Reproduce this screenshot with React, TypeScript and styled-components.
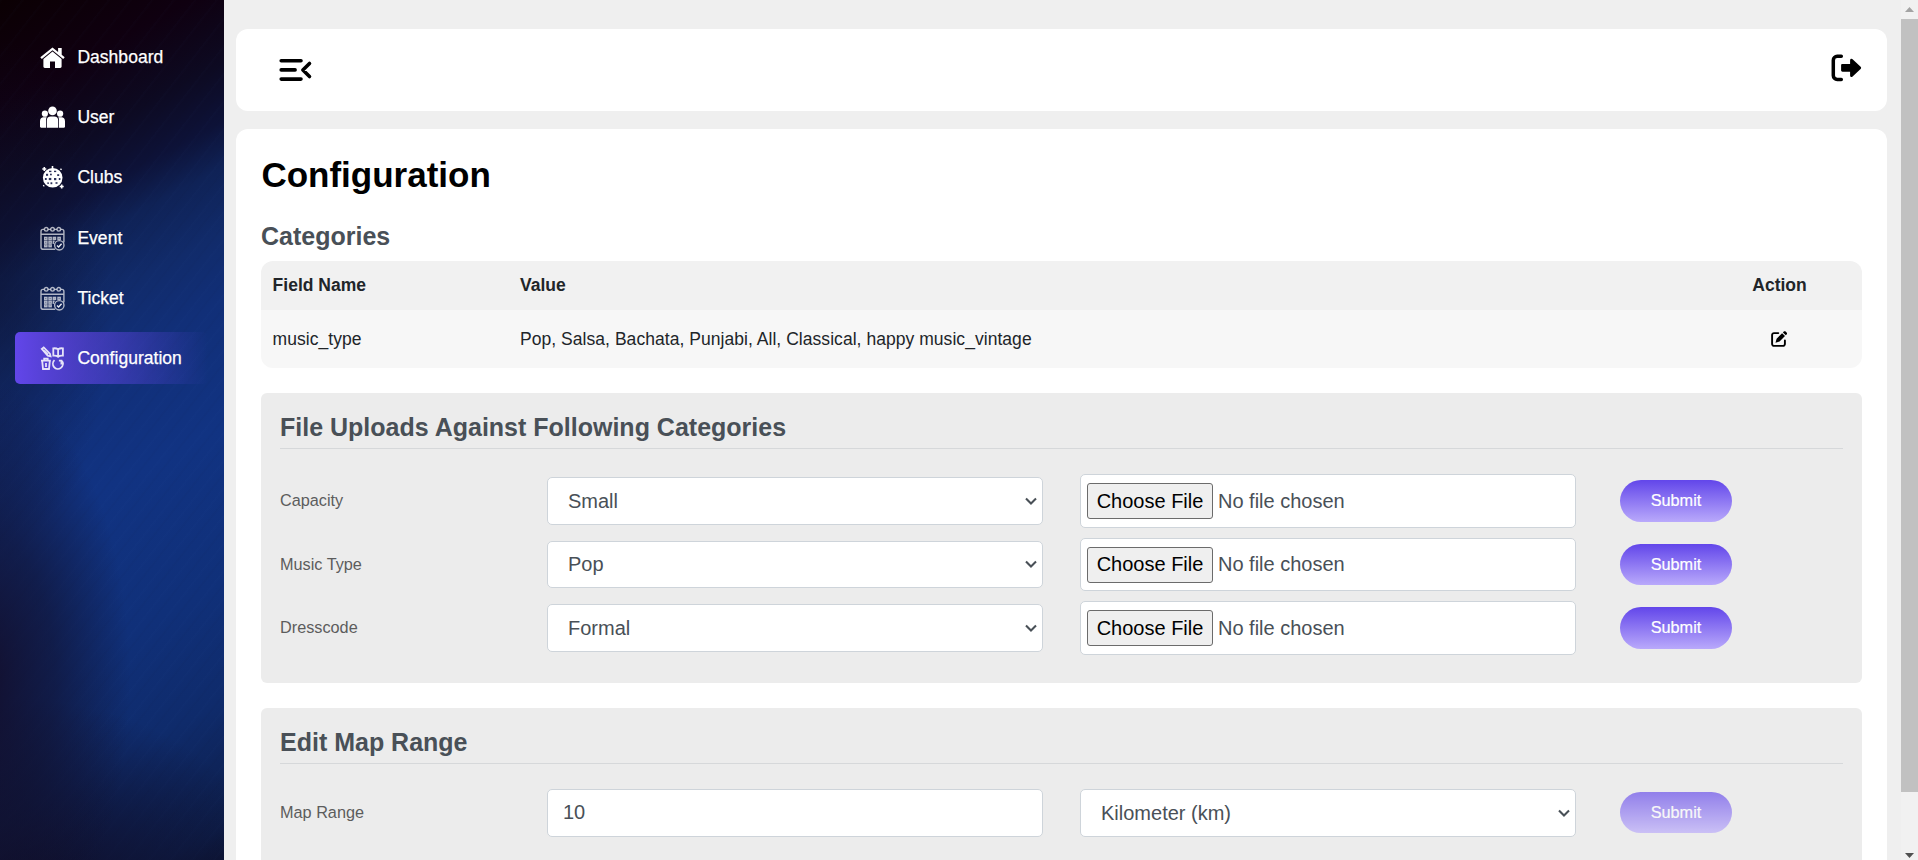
import React from "react";
import styled, { createGlobalStyle, css } from "styled-components";

const GlobalStyle = createGlobalStyle`
  *, *::before, *::after { box-sizing: border-box; }
  html, body { margin: 0; height: 100%; overflow: hidden; }
  body {
    background: #efefef;
    color: #212529;
    font-family: "Liberation Sans", Arial, sans-serif;
    font-size: 17.5px;
  }
  h1, h2 { margin: 0; }
`;

const Page = styled.div`
  display: flex;
  height: 100vh;
  overflow: hidden;
`;

const Sidebar = styled.nav`
  flex: 0 0 224px;
  padding: 31.7px 16px 0 15px;
  background:
    radial-gradient(ellipse 150px 300px at -20px 680px, rgba(19, 11, 36, 0.9), rgba(17, 15, 42, 0.6) 50%, transparent),
    radial-gradient(ellipse 260px 200px at 20px 900px, rgba(16, 11, 34, 0.9), rgba(15, 14, 42, 0.5) 55%, transparent),
    radial-gradient(ellipse 110px 260px at 0 300px, rgba(13, 16, 44, 0.5), transparent),
    repeating-linear-gradient(128deg, rgba(80, 130, 220, 0.014) 0 1px, transparent 3px 7px, rgba(0, 0, 0, 0.025) 9px, transparent 11px 17px),
    linear-gradient(152deg, #0b0003 0, #0f0010 90px, #0d0a22 160px, #0d1238 212px, #0f2256 252px, #112b6a 310px, #112f78 370px, #113382 480px, #103079 620px, #0f2b6b 724px, #0d1d48 836px, #0c1638 860px);
`;

const NavItem = styled.a<{ $active?: boolean }>`
  display: flex;
  align-items: center;
  height: 52px;
  margin-bottom: 8.15px;
  padding-left: 25px;
  gap: 12.4px;
  border-radius: 5px;
  color: #fff;
  font-size: 17.5px;
  letter-spacing: 0.03px;
  -webkit-text-stroke: 0.25px #fff;
  text-decoration: none;
  ${(p) => p.$active && css`background: linear-gradient(90deg, #6246ea, rgba(98, 70, 234, 0));`}

  svg { flex: none; width: 25px; height: 25px; }
`;

const Main = styled.main`
  flex: 1;
  min-width: 0;
  padding: 29px 14px 0 12px;
`;

const TopBar = styled.header`
  display: flex;
  align-items: center;
  justify-content: space-between;
  height: 82px;
  margin-bottom: 18px;
  padding: 0 25px 0 43px;
  border-radius: 12px;
  background: #fff;
`;

const Card = styled.section`
  height: 900px;
  padding: 25px;
  border-radius: 12px;
  background: #fff;
`;

const PageTitle = styled.h1`
  padding-left: 0.4px;
  color: #000;
  font-size: 35px;
  line-height: 42px;
`;

const SectionTitle = styled.h2`
  color: #495057;
  font-size: 25px;
  line-height: 30px;
`;

const CategoriesTitle = styled(SectionTitle)`
  margin: 25px 0 10px;
`;

const Table = styled.div`
  overflow: hidden;
  margin-bottom: 25px;
  border-radius: 12px;
`;

const TableRow = styled.div<{ $head?: boolean }>`
  display: grid;
  grid-template-columns: 247.4px 1fr 165px;
  align-items: center;
  height: ${(p) => (p.$head ? 49 : 58)}px;
  padding-left: 11.6px;
  background: ${(p) => (p.$head ? "#f1f1f1" : "#f7f7f7")};
  font-weight: ${(p) => (p.$head ? 700 : 400)};
  letter-spacing: ${(p) => (p.$head ? 0 : 0.045)}px;
`;

const ActionCell = styled.div`
  display: flex;
  justify-content: center;
`;

const Panel = styled.section`
  margin-bottom: 25px;
  padding: 19px 19px 28.25px;
  border-radius: 6px;
  background: #ececec;
`;

const PanelHead = styled.div`
  height: 37px;
  margin-bottom: 25px;
  border-bottom: 1px solid #d6d8da;
`;

const Rows = styled.div`
  display: grid;
  row-gap: 9.75px;
`;

const FormRow = styled.div`
  display: grid;
  grid-template-columns: [label] 267px [first] 496px 37px [second] 496px 44px [action] 112px;
  align-items: center;

  & > :nth-child(1) { grid-column: label; }
  & > :nth-child(2) { grid-column: first; }
  & > :nth-child(3) { grid-column: second; }
  & > :nth-child(4) { grid-column: action; }
`;

const Label = styled.span`
  color: #5c5c5c;
  font-size: 16.25px;
`;

const control = css`
  border: 1px solid #ced4da;
  border-radius: 5px;
  background: #fff;
  color: #495057;
  font-family: inherit;
  font-size: 20px;
`;

const TextInput = styled.input`
  ${control}
  width: 100%;
  height: 47.5px;
  padding: 0 15px;
`;

const SelectWrap = styled.div`
  display: grid;
  align-items: center;

  & > * { grid-area: 1 / 1; }
  & > svg { justify-self: end; margin-right: 6px; pointer-events: none; }
`;

const Select = styled.select`
  ${control}
  appearance: none;
  width: 100%;
  height: 47.5px;
  padding: 0 20px;
`;

const FileBox = styled.label`
  ${control}
  display: flex;
  align-items: center;
  gap: 5px;
  height: 53.75px;
  padding: 0.5px 6px 0;
`;

const FileButton = styled.span`
  display: flex;
  align-items: center;
  justify-content: center;
  width: 126px;
  height: 36px;
  border: 1px solid #6b6b6b;
  border-radius: 3px;
  background: #efefef;
  color: #000;
`;

const SubmitButton = styled.button`
  height: 41.25px;
  padding: 0;
  border: 0;
  border-radius: 21px;
  background: linear-gradient(#6246ea, #b9a9fb);
  color: #fff;
  font-family: inherit;
  font-size: 16.25px;
  -webkit-text-stroke: 0.2px #fff;

  &:disabled { opacity: 0.65; }
`;

const Scrollbar = styled.div`
  display: flex;
  flex: 0 0 17px;
  flex-direction: column;
  align-items: center;
  background: #f1f1f1;
`;

const Thumb = styled.div`
  width: 17px;
  height: 773px;
  background: #c1c1c1;
`;

const Arrow = styled.div<{ $down?: boolean }>`
  display: flex;
  align-items: center;
  justify-content: center;
  height: 19px;
  color: ${(p) => (p.$down ? "#505050" : "#a3a3a3")};
  ${(p) => p.$down && css`margin-top: auto; height: 10px;`}
`;

const HomeIcon = () => (
  <svg viewBox="0 0 25 25" fill="#fff">
    <path d="M12.5 2.4 .3 12.3l1.5 1.7L12.5 5.3 23.2 14l1.5-1.7-3-2.5V3h-3.6v3.9z" />
    <path d="M12.5 6.5 3.4 13.9V21.5c0 .9.6 1.4 1.4 1.4h5.2v-6.3h5v6.3h5.2c.8 0 1.4-.5 1.4-1.4v-7.6z" />
  </svg>
);

const UsersIcon = () => (
  <svg viewBox="0 0 25 25" fill="#fff">
    <circle cx="12.5" cy="5.9" r="4.3" />
    <circle cx="4.9" cy="8.7" r="3.1" />
    <circle cx="20.1" cy="8.7" r="3.1" />
    <path d="M6.8 22.8v-7.4a4 4 0 0 1 4-4h3.4a4 4 0 0 1 4 4v7.4z" />
    <path d="M6 22.8H1.2c-.8 0-1.2-.4-1.2-1.2v-5.4c0-2.4 1.4-3.9 3.6-3.9h3.1a5 5 0 0 0-.7 2.9zM19 22.8h4.8c.8 0 1.2-.4 1.2-1.2v-5.4c0-2.4-1.4-3.9-3.6-3.9h-3.1c.5.8.7 1.8.7 2.9z" />
  </svg>
);

const DiscoIcon = () => (
  <svg viewBox="0 0 25 25">
    <circle cx="12.7" cy="12.8" r="9.8" fill="#fff" />
    <path d="M12.5 1v3M2.3 4h4M4.3 2v4M19.7 21.5h4M21.7 19.5v4M20.5 4.7l1-1M3.3 21.2l.9-.8" stroke="#fff" strokeWidth="1.6" />
    <g fill="#2a3058">
      <rect x="9" y="5.7" width="2.4" height="1.4" /><rect x="14" y="5.7" width="2.2" height="1.4" />
      <rect x="6" y="8.8" width="2.1" height="2" /><rect x="10" y="8.7" width="1.8" height="1.6" />
      <rect x="17.2" y="9.2" width="2" height="1.8" /><rect x="4.9" y="13" width="1.8" height="2" />
      <rect x="8.8" y="12.9" width="2.5" height="2.2" /><rect x="14" y="13" width="2.3" height="2.2" />
      <rect x="18.8" y="13" width="1.6" height="2" /><rect x="7.3" y="17.4" width="1.6" height="1.5" />
      <rect x="10.5" y="17.3" width="1.8" height="1.9" /><rect x="15.5" y="17.2" width="2" height="1.6" />
    </g>
  </svg>
);

const CalendarIcon = () => (
  <svg viewBox="0 0 25 25" fill="none" stroke="#fff" strokeOpacity=".68" strokeWidth="1.4">
    <path d="M15.2 23.3H3.2C1.8 23.3 1 22.5 1 21.2V5.4C1 4.1 1.8 3.4 3 3.4h1.2M8.2 3.4h2.3M14.5 3.4h2.3M20.8 3.4h1.1c1.3 0 2 .8 2 2v11M1 8.2h22.9" />
    <circle cx="6.2" cy="3.3" r="1.8" /><circle cx="12.5" cy="3.3" r="1.8" /><circle cx="18.8" cy="3.3" r="1.8" />
    <g strokeWidth="1.4">
      <rect x="4.7" y="11.4" width="2.2" height="2" /><rect x="9" y="11.4" width="2.2" height="2" /><rect x="13.3" y="11.4" width="2.2" height="2" /><rect x="18" y="11.4" width="2.2" height="2" />
      <rect x="4.7" y="15.2" width="2.2" height="2" /><rect x="9" y="15.2" width="2.2" height="2" /><path d="M14.6 15.2h-1.3v2h.6" />
      <rect x="4.7" y="18.9" width="2.2" height="1.8" /><rect x="9" y="18.9" width="2.2" height="1.8" />
    </g>
    <circle cx="19.3" cy="19.3" r="4.7" />
    <path d="m17 19.5 1.6 1.5 3-3.3" strokeOpacity=".9" />
  </svg>
);

const ConfigIcon = () => (
  <svg viewBox="0 0 25 25" fill="none" stroke="#fff" strokeOpacity=".85" strokeWidth="1.8">
    <path d="m1.8 2.9 1.9-1.5 6.2 6.2.7 2.8-2.9-.7zM4 4.6l4 4" />
    <path d="M18.1 3.4v7.3M18.1 3.4c-1.3-1.1-3-1.3-4.8-1.1v7.3c1.8-.2 3.5 0 4.8 1.1 1.3-1.1 3-1.3 4.8-1.1V2.3c-1.8-.2-3.5 0-4.8 1.1z" />
    <path d="M1 14.6h9.8M4.2 14.3v-1.7h3.5v1.7M2.2 14.8l.8 8.2h6l.8-8.2M6 17v4" />
    <path d="M14.5 14.2a5 5 0 1 0 7.6.9M21.4 18.4v-4.2M18.9 14.7h3.3" />
  </svg>
);

const MenuFoldIcon = () => (
  <svg width="34" height="24" viewBox="0 0 34 24" fill="none" stroke="#000" strokeWidth="3.6" strokeLinecap="round" strokeLinejoin="round">
    <path d="M2.2 2.7H22M2.2 11.9h13.9M2.2 21.1H22M30.5 5.4l-6.6 6.6 6.6 6.5" />
  </svg>
);

const LogoutSvg = styled.svg`
  margin-bottom: 4px;
`;

const LogoutIcon = () => (
  <LogoutSvg width="31" height="28" viewBox="0 0 31 28">
    <path d="M10.3 2.3H6.2a3.9 3.9 0 0 0-3.9 3.9v15.4a3.9 3.9 0 0 0 3.9 3.9h4.1" fill="none" stroke="#000" strokeWidth="3.5" strokeLinecap="round" />
    <path d="M11.5 10.1h7.6V6.2c0-1.5 1.5-2 2.5-1l8 7.6c.7.7.7 1.5 0 2.2l-8 7.6c-1 1-2.5.5-2.5-1v-3.9h-7.6c-.9 0-1.4-.5-1.4-1.4v-4.8c0-.9.5-1.4 1.4-1.4z" />
  </LogoutSvg>
);

const EditIcon = () => (
  <svg width="17" height="16" viewBox="0 0 17 16">
    <path d="M7.3 2.1H3A1.9 1.9 0 0 0 1.1 4v9A1.9 1.9 0 0 0 3 14.9h9a1.9 1.9 0 0 0 1.9-1.9V9.4" fill="none" stroke="#000" strokeWidth="1.9" strokeLinecap="round" />
    <path d="m11.1 2.2 2.9 2.9-5.5 5.4-4 1.2 1.1-3.9zM11.9 1.4l.9-.8c.6-.6 1.2-.6 1.8 0l1 1c.6.6.6 1.2 0 1.8l-.8.9z" />
  </svg>
);

const Chevron = () => (
  <svg width="12" height="8" viewBox="0 0 12 8" fill="none" stroke="#495057" strokeWidth="2.1">
    <path d="m1 1.4 5 5 5-5" />
  </svg>
);

const navItems = [
  { label: "Dashboard", Icon: HomeIcon },
  { label: "User", Icon: UsersIcon },
  { label: "Clubs", Icon: DiscoIcon },
  { label: "Event", Icon: CalendarIcon },
  { label: "Ticket", Icon: CalendarIcon },
  { label: "Configuration", Icon: ConfigIcon },
];

const uploads = [
  { label: "Capacity", value: "Small" },
  { label: "Music Type", value: "Pop" },
  { label: "Dresscode", value: "Formal" },
];

const SelectField = ({ value }: { value: string }) => (
  <SelectWrap>
    <Select defaultValue={value}>
      <option>{value}</option>
    </Select>
    <Chevron />
  </SelectWrap>
);

export default function App() {
  return (
    <Page>
      <GlobalStyle />
      <Sidebar>
        {navItems.map(({ label, Icon }) => (
          <NavItem key={label} $active={label === "Configuration"}>
            <Icon />
            {label}
          </NavItem>
        ))}
      </Sidebar>
      <Main>
        <TopBar>
          <MenuFoldIcon />
          <LogoutIcon />
        </TopBar>
        <Card>
          <PageTitle>Configuration</PageTitle>
          <CategoriesTitle>Categories</CategoriesTitle>
          <Table>
            <TableRow $head>
              <div>Field Name</div>
              <div>Value</div>
              <ActionCell>Action</ActionCell>
            </TableRow>
            <TableRow>
              <div>music_type</div>
              <div>Pop, Salsa, Bachata, Punjabi, All, Classical, happy music_vintage</div>
              <ActionCell><EditIcon /></ActionCell>
            </TableRow>
          </Table>
          <Panel>
            <PanelHead>
              <SectionTitle>File Uploads Against Following Categories</SectionTitle>
            </PanelHead>
            <Rows>
              {uploads.map((u) => (
                <FormRow key={u.label}>
                  <Label>{u.label}</Label>
                  <SelectField value={u.value} />
                  <FileBox>
                    <FileButton>Choose File</FileButton>
                    <span>No file chosen</span>
                  </FileBox>
                  <SubmitButton>Submit</SubmitButton>
                </FormRow>
              ))}
            </Rows>
          </Panel>
          <Panel>
            <PanelHead>
              <SectionTitle>Edit Map Range</SectionTitle>
            </PanelHead>
            <FormRow>
              <Label>Map Range</Label>
              <TextInput defaultValue="10" />
              <SelectField value="Kilometer (km)" />
              <SubmitButton disabled>Submit</SubmitButton>
            </FormRow>
          </Panel>
        </Card>
      </Main>
      <Scrollbar>
        <Arrow>
          <svg width="9" height="5" viewBox="0 0 9 5"><path d="M0 5 4.5 0 9 5z" fill="currentColor" /></svg>
        </Arrow>
        <Thumb />
        <Arrow $down>
          <svg width="9" height="5" viewBox="0 0 9 5"><path d="M0 0h9L4.5 5z" fill="currentColor" /></svg>
        </Arrow>
      </Scrollbar>
    </Page>
  );
}
